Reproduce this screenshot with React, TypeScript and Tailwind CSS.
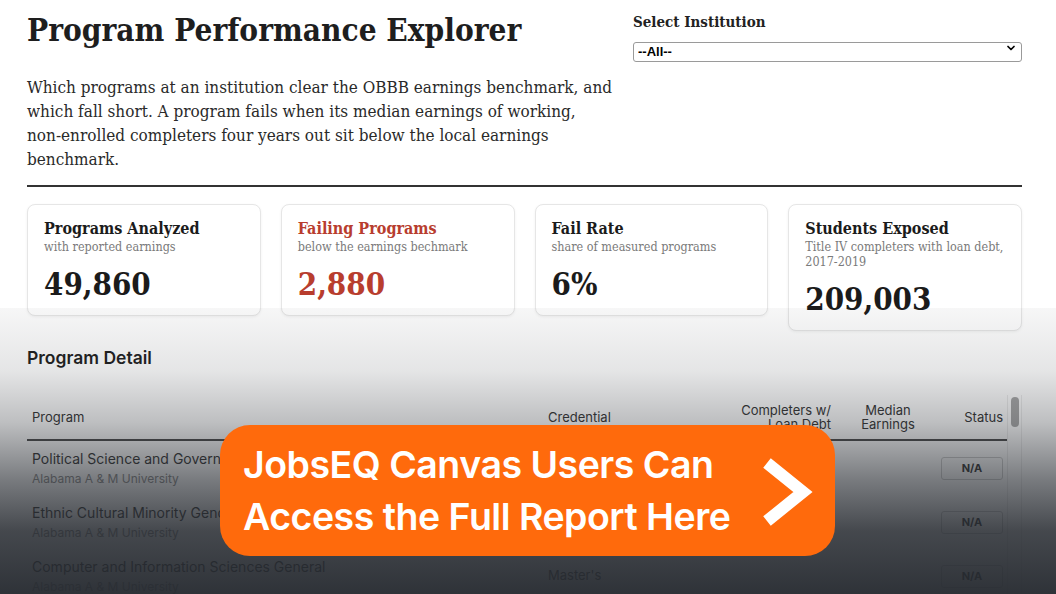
import { ChevronDown } from 'lucide-react';

const serif = 'font-["DejaVu_Serif_Condensed","DejaVu_Serif",serif]';
const sans = 'font-["Inter","Liberation_Sans",sans-serif]';

type Stat = { title: string; sub: string; value: string; red?: boolean };

const stats: Stat[] = [
  { title: 'Programs Analyzed', sub: 'with reported earnings', value: '49,860' },
  { title: 'Failing Programs', sub: 'below the earnings bechmark', value: '2,880', red: true },
  { title: 'Fail Rate', sub: 'share of measured programs', value: '6%' },
  { title: 'Students Exposed', sub: 'Title IV completers with loan debt, 2017-2019', value: '209,003' },
];

const rows = [
  { name: 'Political Science and Government General', school: 'Alabama A & M University', cred: "Bachelor's" },
  { name: 'Ethnic Cultural Minority Gender and Group Studies', school: 'Alabama A & M University', cred: "Bachelor's" },
  { name: 'Computer and Information Sciences General', school: 'Alabama A & M University', cred: "Master's" },
  { name: 'Biology Biological Sciences General', school: 'Alabama A & M University', cred: "Bachelor's" },
];

function StatCard({ s }: { s: Stat }) {
  return (
    <div className="rounded-lg border border-[#e6e6e6] bg-white px-4 pt-[14px] pb-[12px] shadow-[0_1px_3px_rgba(0,0,0,0.06)]">
      <div className={`${serif} text-[16px] font-bold leading-[20px] ${s.red ? 'text-[#b83d2e]' : 'text-[#1b1b1b]'}`}>{s.title}</div>
      <div className={`${serif} text-[12.5px] leading-[15px] text-[#7a7a7a]`}>{s.sub}</div>
      <div className={`${serif} mt-[11px] text-[31px] font-bold leading-[38px] ${s.red ? 'text-[#b83d2e]' : 'text-[#1b1b1b]'}`}>{s.value}</div>
    </div>
  );
}

export default function App() {
  return (
    <div className="relative h-[594px] w-full overflow-hidden bg-white">
      <div className="pl-[27px] pr-[34px] pt-[8px]">
        {/* header: title + blurb on the left, institution picker on the right */}
        <div className="flex justify-between">
          <div className="w-[590px]">
            <h1 className={`${serif} text-[31.3px] font-bold leading-[44px] text-[#1e1e1e]`}>Program Performance Explorer</h1>
            <p className={`${serif} mt-[23px] text-[17px] leading-[24px] text-[#2a2a2a]`}>
              Which programs at an institution clear the OBBB earnings benchmark, and which fall short. A program fails when its median earnings of working, <span className="whitespace-nowrap">non-enrolled</span> completers four years out sit below the local earnings benchmark.
            </p>
          </div>
          <div className="w-[389px] pt-[4px]">
            <div className={`${serif} text-[15px] font-bold leading-[20px] text-[#222]`}>Select Institution</div>
            <div className="relative mt-[6px]">
              <select className="h-[20px] w-full appearance-none rounded-[3px] border border-[#9a9a9a] bg-white pl-[4px] font-['Liberation_Sans',sans-serif] text-[13px] font-bold leading-[18px] text-black">
                <option>--All--</option>
              </select>
              <ChevronDown className="pointer-events-none absolute right-[5px] top-[4px] h-[12px] w-[12px] text-black" strokeWidth={3.5} />
            </div>
          </div>
        </div>

        <div className="mt-[14px] h-[2px] bg-[#333]" />

        {/* summary cards */}
        <div className="mt-[17px] grid grid-cols-4 items-start gap-[20px]">
          {stats.map((s) => (
            <StatCard key={s.title} s={s} />
          ))}
        </div>

        <h2 className={`${sans} mt-[15px] text-[17.5px] font-semibold leading-[24px] text-[#1f1f1f]`}>Program Detail</h2>

        {/* program table */}
        <div className={`${sans} mt-[25px] flex`}>
          <div className="w-[980px]">
            <div className="grid h-[46px] grid-cols-[516px_170px_130px_90px_74px] items-center border-b-2 border-[#4a4a4a] text-[13px] leading-[14px] text-[#333]">
              <div className="pl-[5px]">Program</div>
              <div className="pl-[5px]">Credential</div>
              <div className="pr-[12px] text-right">Completers w/<br />Loan Debt</div>
              <div className="text-center">Median<br />Earnings</div>
              <div className="pr-[4px] text-right">Status</div>
            </div>
            {rows.map((r) => (
              <div key={r.name} className="grid h-[54px] grid-cols-[516px_170px_130px_90px_74px] items-center">
                <div className="self-start pl-[5px] pt-[8px]">
                  <div className="truncate text-[14px] leading-[20px] text-[#333]">{r.name}</div>
                  <div className="mt-[2px] text-[12px] leading-[16px] text-[#8a8a8a]">{r.school}</div>
                </div>
                <div className="pl-[5px] text-[13px] text-[#444]">{r.cred}</div>
                <div />
                <div />
                <div className="flex justify-end pr-[4px]">
                  <span className="flex h-[23px] w-[62px] items-center justify-center rounded-[3px] border border-[#cfcfcf] text-[11px] font-bold text-[#333]">N/A</span>
                </div>
              </div>
            ))}
          </div>
          <div className="w-[15px] border-x border-[#ececec] pt-[2px]">
            <div className="mx-auto h-[30px] w-[8px] rounded-full bg-[#a8a8a8]" />
          </div>
        </div>
      </div>

      {/* fade over the lower half */}
      <div className="pointer-events-none absolute inset-x-0 top-[308px] bottom-0 bg-[linear-gradient(to_bottom,rgba(38,42,48,0.04)_0%,rgba(38,42,48,0.12)_22%,rgba(38,42,48,0.3)_40%,rgba(38,42,48,0.62)_60%,rgba(38,42,48,0.86)_78%,rgba(38,42,48,0.96)_100%)]" />

      {/* call to action */}
      <a
        href="#"
        className="absolute left-[220px] top-[425px] flex h-[131px] w-[615px] items-center justify-between rounded-[30px] bg-[#ff6a0c] pl-[23px] pr-[22px] text-white"
      >
        <span className="font-['Inter',sans-serif] text-[37.5px] font-semibold leading-[52px] tracking-[-0.5px]">
          JobsEQ Canvas Users Can
          <br />
          Access the Full Report Here
        </span>
        <svg width="54" height="70" viewBox="0 0 54 70" className="mt-[2px]">
          <polyline points="8,6 44,35 8,64" fill="none" stroke="white" strokeWidth="12" strokeLinejoin="miter" />
        </svg>
      </a>
    </div>
  );
}
